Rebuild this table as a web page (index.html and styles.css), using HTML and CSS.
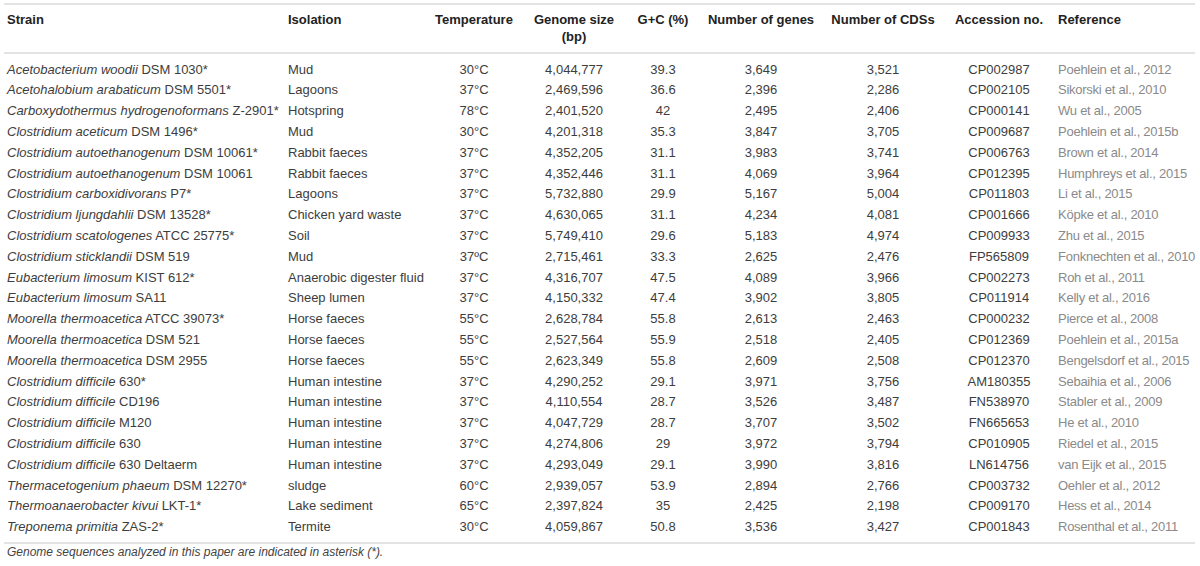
FILE: index.html
```html
<!DOCTYPE html>
<html>
<head>
<meta charset="utf-8">
<link rel="stylesheet" href="styles.css">
</head>
<body>
<div class="wrap">
<table class="data">
<colgroup>
<col class="c-strain"><col class="c-iso"><col class="c-temp"><col class="c-gen"><col class="c-gc"><col class="c-genes"><col class="c-cds"><col class="c-acc"><col class="c-ref">
</colgroup>
<thead>
<tr>
<th class="l">Strain</th>
<th class="l">Isolation</th>
<th>Temperature</th>
<th>Genome size<br>(bp)</th>
<th>G+C (%)</th>
<th>Number of genes</th>
<th>Number of CDSs</th>
<th>Accession no.</th>
<th class="l ref">Reference</th>
</tr>
</thead>
<tbody>
<tr><td class="l"><i>Acetobacterium woodii</i> DSM 1030*</td><td class="l">Mud</td><td>30°C</td><td>4,044,777</td><td>39.3</td><td>3,649</td><td>3,521</td><td>CP002987</td><td class="l ref">Poehlein et al., 2012</td></tr>
<tr><td class="l"><i>Acetohalobium arabaticum</i> DSM 5501*</td><td class="l">Lagoons</td><td>37°C</td><td>2,469,596</td><td>36.6</td><td>2,396</td><td>2,286</td><td>CP002105</td><td class="l ref">Sikorski et al., 2010</td></tr>
<tr><td class="l"><i>Carboxydothermus hydrogenoformans</i> Z-2901*</td><td class="l">Hotspring</td><td>78°C</td><td>2,401,520</td><td>42</td><td>2,495</td><td>2,406</td><td>CP000141</td><td class="l ref">Wu et al., 2005</td></tr>
<tr><td class="l"><i>Clostridium aceticum</i> DSM 1496*</td><td class="l">Mud</td><td>30°C</td><td>4,201,318</td><td>35.3</td><td>3,847</td><td>3,705</td><td>CP009687</td><td class="l ref">Poehlein et al., 2015b</td></tr>
<tr><td class="l"><i>Clostridium autoethanogenum</i> DSM 10061*</td><td class="l">Rabbit faeces</td><td>37°C</td><td>4,352,205</td><td>31.1</td><td>3,983</td><td>3,741</td><td>CP006763</td><td class="l ref">Brown et al., 2014</td></tr>
<tr><td class="l"><i>Clostridium autoethanogenum</i> DSM 10061</td><td class="l">Rabbit faeces</td><td>37°C</td><td>4,352,446</td><td>31.1</td><td>4,069</td><td>3,964</td><td>CP012395</td><td class="l ref">Humphreys et al., 2015</td></tr>
<tr><td class="l"><i>Clostridium carboxidivorans</i> P7*</td><td class="l">Lagoons</td><td>37°C</td><td>5,732,880</td><td>29.9</td><td>5,167</td><td>5,004</td><td>CP011803</td><td class="l ref">Li et al., 2015</td></tr>
<tr><td class="l"><i>Clostridium ljungdahlii</i> DSM 13528*</td><td class="l">Chicken yard waste</td><td>37°C</td><td>4,630,065</td><td>31.1</td><td>4,234</td><td>4,081</td><td>CP001666</td><td class="l ref">Köpke et al., 2010</td></tr>
<tr><td class="l"><i>Clostridium scatologenes</i> ATCC 25775*</td><td class="l">Soil</td><td>37°C</td><td>5,749,410</td><td>29.6</td><td>5,183</td><td>4,974</td><td>CP009933</td><td class="l ref">Zhu et al., 2015</td></tr>
<tr><td class="l"><i>Clostridium sticklandii</i> DSM 519</td><td class="l">Mud</td><td>37ºC</td><td>2,715,461</td><td>33.3</td><td>2,625</td><td>2,476</td><td>FP565809</td><td class="l ref">Fonknechten et al., 2010</td></tr>
<tr><td class="l"><i>Eubacterium limosum</i> KIST 612*</td><td class="l">Anaerobic digester fluid</td><td>37°C</td><td>4,316,707</td><td>47.5</td><td>4,089</td><td>3,966</td><td>CP002273</td><td class="l ref">Roh et al., 2011</td></tr>
<tr><td class="l"><i>Eubacterium limosum</i> SA11</td><td class="l">Sheep lumen</td><td>37°C</td><td>4,150,332</td><td>47.4</td><td>3,902</td><td>3,805</td><td>CP011914</td><td class="l ref">Kelly et al., 2016</td></tr>
<tr><td class="l"><i>Moorella thermoacetica</i> ATCC 39073*</td><td class="l">Horse faeces</td><td>55°C</td><td>2,628,784</td><td>55.8</td><td>2,613</td><td>2,463</td><td>CP000232</td><td class="l ref">Pierce et al., 2008</td></tr>
<tr><td class="l"><i>Moorella thermoacetica</i> DSM 521</td><td class="l">Horse faeces</td><td>55°C</td><td>2,527,564</td><td>55.9</td><td>2,518</td><td>2,405</td><td>CP012369</td><td class="l ref">Poehlein et al., 2015a</td></tr>
<tr><td class="l"><i>Moorella thermoacetica</i> DSM 2955</td><td class="l">Horse faeces</td><td>55°C</td><td>2,623,349</td><td>55.8</td><td>2,609</td><td>2,508</td><td>CP012370</td><td class="l ref">Bengelsdorf et al., 2015</td></tr>
<tr><td class="l"><i>Clostridium difficile</i> 630*</td><td class="l">Human intestine</td><td>37°C</td><td>4,290,252</td><td>29.1</td><td>3,971</td><td>3,756</td><td>AM180355</td><td class="l ref">Sebaihia et al., 2006</td></tr>
<tr><td class="l"><i>Clostridium difficile</i> CD196</td><td class="l">Human intestine</td><td>37°C</td><td>4,110,554</td><td>28.7</td><td>3,526</td><td>3,487</td><td>FN538970</td><td class="l ref">Stabler et al., 2009</td></tr>
<tr><td class="l"><i>Clostridium difficile</i> M120</td><td class="l">Human intestine</td><td>37°C</td><td>4,047,729</td><td>28.7</td><td>3,707</td><td>3,502</td><td>FN665653</td><td class="l ref">He et al., 2010</td></tr>
<tr><td class="l"><i>Clostridium difficile</i> 630</td><td class="l">Human intestine</td><td>37°C</td><td>4,274,806</td><td>29</td><td>3,972</td><td>3,794</td><td>CP010905</td><td class="l ref">Riedel et al., 2015</td></tr>
<tr><td class="l"><i>Clostridium difficile</i> 630 Deltaerm</td><td class="l">Human intestine</td><td>37°C</td><td>4,293,049</td><td>29.1</td><td>3,990</td><td>3,816</td><td>LN614756</td><td class="l ref">van Eijk et al., 2015</td></tr>
<tr><td class="l"><i>Thermacetogenium phaeum</i> DSM 12270*</td><td class="l">sludge</td><td>60°C</td><td>2,939,057</td><td>53.9</td><td>2,894</td><td>2,766</td><td>CP003732</td><td class="l ref">Oehler et al., 2012</td></tr>
<tr><td class="l"><i>Thermoanaerobacter kivui</i> LKT-1*</td><td class="l">Lake sediment</td><td>65°C</td><td>2,397,824</td><td>35</td><td>2,425</td><td>2,198</td><td>CP009170</td><td class="l ref">Hess et al., 2014</td></tr>
<tr><td class="l"><i>Treponema primitia</i> ZAS-2*</td><td class="l">Termite</td><td>30°C</td><td>4,059,867</td><td>50.8</td><td>3,536</td><td>3,427</td><td>CP001843</td><td class="l ref">Rosenthal et al., 2011</td></tr>
</tbody>
</table>
<p class="note">Genome sequences analyzed in this paper are indicated in asterisk (*).</p>
</div>
</body>
</html>
```

FILE: styles.css
```css
html, body {
  margin: 0;
  padding: 0;
  background: #ffffff;
}

body {
  font-family: "Liberation Sans", Arial, Helvetica, sans-serif;
  font-size: 13px;
  color: #3d3d3d;
}

.wrap {
  padding: 3px 5px 0 4px;
}

.data {
  width: 1191px;
  border-collapse: collapse;
  table-layout: fixed;
}

.c-strain { width: 281px; }
.c-iso { width: 139px; }
.c-temp { width: 100px; }
.c-gen { width: 100px; }
.c-gc { width: 78px; }
.c-genes { width: 118px; }
.c-cds { width: 126px; }
.c-acc { width: 106px; }
.c-ref { width: 143px; }

.data th {
  font-weight: bold;
  color: #222222;
  text-align: center;
  vertical-align: top;
  line-height: 17px;
  padding: 6px 0 7px 0;
  border-top: 2px solid #e3e3e3;
  border-bottom: 2px solid #e3e3e3;
  white-space: nowrap;
}

.data td {
  text-align: center;
  line-height: 20.8px;
  padding: 0;
  white-space: nowrap;
  color: #3d3d3d;
}

.data .l {
  text-align: left;
  padding-left: 3px;
}

.data .ref {
  padding-left: 6px;
}

.data td.ref {
  color: #8a8a8a;
  letter-spacing: -0.25px;
}

.data tbody tr:first-child td {
  padding-top: 5.6px;
}

.data tbody tr:last-child td {
  padding-bottom: 4px;
  border-bottom: 2px solid #e3e3e3;
}

.note {
  margin: 0;
  padding: 0 0 0 3px;
  font-style: italic;
  color: #444444;
  line-height: 17px;
  font-size: 12px;
}
```
